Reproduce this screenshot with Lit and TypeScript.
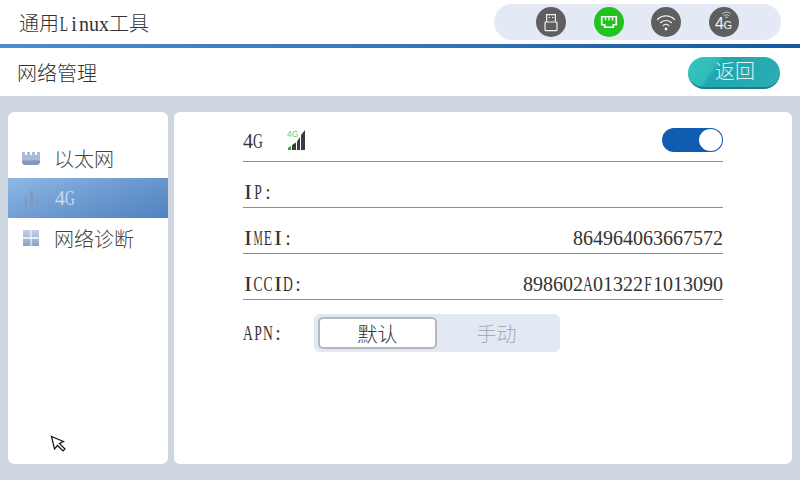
import { LitElement, html, css } from "lit";
import { customElement } from "lit/decorators.js";

// Latin text on the device is half-width: every character takes one 10px cell.
const cellClass = (c: string) =>
  c === "M" ? "ch xwide" : c === "I" ? "ch thin" : /[A-Z]/.test(c) ? "ch wide" : "ch";
const mono = (text: string) =>
  [...text].map((c) => html`<span class=${cellClass(c)}>${c}</span>`);

@customElement("app-root")
export class AppRoot extends LitElement {
  static styles = css`
    :host {
      display: flex;
      flex-direction: column;
      position: relative;
      width: 800px;
      height: 480px;
      overflow: hidden;
      background: #ced4e0;
      font-family: "Liberation Serif", "Noto Sans CJK SC", serif;
      font-size: 20px;
      font-weight: 300;
      color: #333;
    }
    .ch {
      display: inline-flex;
      justify-content: center;
      width: 10px;
      white-space: nowrap;
    }
    .ch.wide { transform: scaleX(0.68); }
    .ch.xwide { transform: scaleX(0.52); }
    .ch.thin { transform: scaleX(1.2); }
    .top {
      height: 44px;
      box-sizing: border-box;
      padding: 4px 19px 4px 19px;
      display: flex;
      align-items: center;
      justify-content: space-between;
      background: #fff;
    }
    .status {
      width: 287px;
      height: 36px;
      box-sizing: border-box;
      padding-left: 42px;
      border-radius: 18px;
      background: #e3eaf5;
      display: flex;
      align-items: center;
      gap: 28px;
    }
    .status svg { width: 30px; height: 30px; display: block; flex: none; }
    .status svg.wifi { margin-left: -1px; }
    .stripe {
      height: 4px;
      background: linear-gradient(90deg, #4f8bcf 0%, #3576bd 50%, #15589f 100%);
    }
    .sub {
      height: 48px;
      box-sizing: border-box;
      padding: 0 20px 0 17px;
      background: #fff;
      display: flex;
      align-items: center;
      justify-content: space-between;
    }
    .back {
      width: 92px;
      height: 32px;
      box-sizing: border-box;
      padding-bottom: 2px;
      padding-left: 2px;
      margin-top: 1px;
      border-radius: 16px;
      border-bottom: 2px solid #1f7d86;
      background: linear-gradient(125deg, #3ac6be 0%, #2fbcb8 28%, #20a6ad 33%, #2caeb2 100%);
      color: #dff3f3;
      display: flex;
      align-items: center;
      justify-content: center;
    }
    .main {
      flex: 1;
      display: flex;
      gap: 6px;
      padding: 16px 8px;
    }
    .side, .content { background: #fff; border-radius: 6px; }
    .side {
      width: 160px;
      box-sizing: border-box;
      padding-top: 26px;
    }
    .nav {
      height: 40px;
      box-sizing: border-box;
      padding-left: 14px;
      display: flex;
      align-items: center;
      gap: 14px;
      color: #444;
    }
    .nav svg { width: 18px; height: 18px; flex: none; display: block; }
    .nav.on {
      gap: 15px;
      background: linear-gradient(160deg, #8fb8e4 0%, #6d9ad0 50%, #4f83c0 100%);
      color: #c9dcf3;
    }
    .content {
      flex: 1;
      box-sizing: border-box;
      padding: 8px 69px 0;
    }
    .row {
      height: 46px;
      box-sizing: border-box;
      border-bottom: 1px solid #8c8c8c;
      display: flex;
      align-items: flex-end;
      justify-content: space-between;
      line-height: 30px;
    }
    .row.first {
      height: 42px;
      align-items: center;
    }
    .left { display: flex; align-items: center; gap: 23px; }
    .left svg { width: 20px; height: 20px; display: block; margin-top: -2px; }
    .toggle {
      width: 61px;
      height: 24px;
      box-sizing: border-box;
      border-radius: 12px;
      background: #0f5cb0;
      display: flex;
      justify-content: flex-end;
      align-items: center;
      padding-right: 1px;
      margin-top: -2px;
    }
    .knob { width: 23px; height: 22px; border-radius: 50%; background: #fff; }
    .apn {
      display: flex;
      align-items: center;
      gap: 31px;
      margin-top: 14px;
    }
    .seg {
      width: 246px;
      height: 38px;
      box-sizing: border-box;
      padding: 3px 4px;
      border-radius: 6px;
      background: #e2e9f5;
      display: flex;
      align-items: stretch;
    }
    .seg div {
      width: 119px;
      display: flex;
      align-items: center;
      justify-content: center;
      box-sizing: border-box;
      color: #a9adb3;
    }
    .seg .sel {
      background: #fff;
      border: 2px solid #b4b7bc;
      border-radius: 5px;
      color: #333;
    }
    .cursor {
      position: absolute;
      left: 50px;
      top: 435px;
      width: 18px;
      height: 18px;
    }
  `;

  render() {
    return html`
      <div class="top">
        <div>通用${mono("Linux")}工具</div>
        <div class="status">
          <svg viewBox="0 0 30 30">
            <circle cx="15" cy="15" r="15" fill="#5f5f5f"/>
            <g fill="none" stroke="#f2f2f2" stroke-width="1.2">
              <path d="M10.600 15V7.600h8.800V15"/>
              <rect x="9" y="15" width="12" height="8.600" rx="0.800"/>
              <path d="M12.500 10.500h1.500M16 10.500h1.500"/>
            </g>
          </svg>
          <svg viewBox="0 0 30 30">
            <circle cx="15" cy="15" r="15" fill="#22c31f"/>
            <path d="M7.700 9.700h14.600v8h-3v2.600h-8.600v-2.600h-3z" fill="none" stroke="#fff" stroke-width="1.600"/>
            <path d="M11.500 10.500v3M15 10.500v3M18.500 10.500v3" stroke="#fff" stroke-width="1.300"/>
          </svg>
          <svg class="wifi" viewBox="0 0 30 30">
            <circle cx="15" cy="15" r="15" fill="#5f5f5f"/>
            <g fill="none" stroke="#f2f2f2" stroke-width="1.200" stroke-linecap="round">
              <path d="M6.500 12.500a12 12 0 0 1 17 0"/>
              <path d="M9.500 15.700a8 8 0 0 1 11 0"/>
              <path d="M12.200 18.600a4 4 0 0 1 5.600 0"/>
            </g>
            <circle cx="15" cy="22" r="1.400" fill="#f2f2f2"/>
          </svg>
          <svg viewBox="0 0 30 30">
            <circle cx="15" cy="15" r="15" fill="#5f5f5f"/>
            <g fill="none" stroke="#cfcfcf" stroke-width="0.900" stroke-linecap="round">
              <path d="M13.500 6.500a6 6 0 0 1 8 0"/>
              <path d="M15 8.500a4 4 0 0 1 5 0"/>
              <path d="M16.300 10.300a2 2 0 0 1 2.400 0"/>
            </g>
            <text x="6" y="22" font-family="Liberation Sans" font-size="16" fill="#f5f5f5">4</text>
            <text x="14.500" y="22" font-family="Liberation Sans" font-size="11" fill="#f5f5f5">G</text>
          </svg>
        </div>
      </div>
      <div class="stripe"></div>
      <div class="sub">
        <div>网络管理</div>
        <div class="back">返回</div>
      </div>
      <div class="main">
        <div class="side">
          <div class="nav">
            <svg viewBox="0 0 18 18">
              <path d="M0 3h3v3h2V3h3v3h2V3h3v3h2V3h3v10.500l-2 2.500H2l-2-2.500z" fill="#a9bbd7"/>
              <path d="M0 11.500h18v2L16 16H2L0 13.500z" fill="#8098bf"/>
            </svg>
            <span>以太网</span>
          </div>
          <div class="nav on">
            <svg viewBox="0 0 18 18">
              <path d="M3 9h2v8H3zM8 2h3v15H8zM14 10h2v7h-2z" fill="#7b9ac2"/>
            </svg>
            <span>${mono("4G")}</span>
          </div>
          <div class="nav">
            <svg viewBox="0 0 18 18">
              <defs>
                <linearGradient id="g" x1="0" y1="0" x2="0" y2="1">
                  <stop offset="0" stop-color="#c2d1e6"/>
                  <stop offset="1" stop-color="#8ba4c8"/>
                </linearGradient>
              </defs>
              <path d="M1 1h7.500v7.300H1zM9.500 1H17v7.300H9.500zM1 9.700h7.500V17H1zM9.500 9.700H17V17H9.500z" fill="url(#g)"/>
            </svg>
            <span>网络诊断</span>
          </div>
        </div>
        <div class="content">
          <div class="row first">
            <div class="left">
              <span>${mono("4G")}</span>
              <svg viewBox="0 0 20 20">
                <text x="1" y="7" font-family="Liberation Sans" font-size="8.500" fill="#5fce5f">4G</text>
                <path d="M2 20v-2l1.500-1.500H5V20z" fill="#2fa83a"/>
                <path d="M6 20v-5l4-2.500V20zM11 20V11.500L14 7v13zM15 20V5l4-5v20z" fill="#3c3c3c"/>
              </svg>
            </div>
            <div class="toggle"><div class="knob"></div></div>
          </div>
          <div class="row"><span>${mono("IP:")}</span></div>
          <div class="row"><span>${mono("IMEI:")}</span><span>${mono("864964063667572")}</span></div>
          <div class="row"><span>${mono("ICCID:")}</span><span>${mono("898602A01322F1013090")}</span></div>
          <div class="apn">
            <span>${mono("APN:")}</span>
            <div class="seg">
              <div class="sel">默认</div>
              <div>手动</div>
            </div>
          </div>
        </div>
      </div>
      <svg class="cursor" viewBox="0 0 18 18">
        <path d="M1.500 1.500L4.500 14l3-3.500 5.500 5.500 2-2-5.500-5.500 4-2z" fill="#fff" stroke="#111" stroke-width="1.200"/>
      </svg>
    `;
  }
}
